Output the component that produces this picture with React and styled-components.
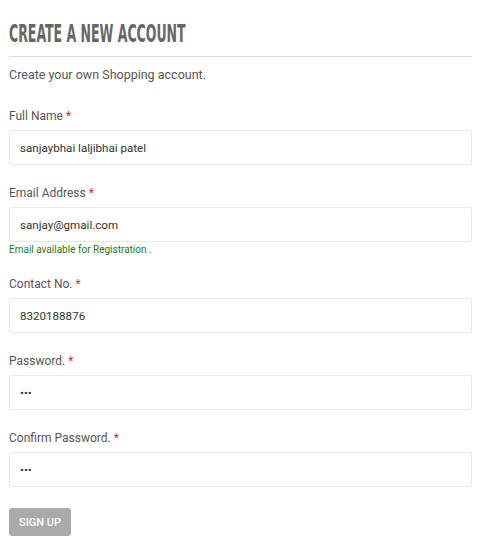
import React, { useState } from 'react';
import styled, { createGlobalStyle } from 'styled-components';

const GlobalStyle = createGlobalStyle`
	body {
		margin: 0;
		background: #fff;
		font-family: Roboto, 'Liberation Sans', sans-serif;
		color: #555;
	}
	* { box-sizing: border-box; }
`;

const Wrapper = styled.div`
	width: 463px;
	margin-left: 9px;
	padding-top: 21px;
`;

const Title = styled.h2`
	margin: 0;
	height: 26px;
	font-size: 0;
	line-height: 26px;
`;

// condensed display face is not installed, so squeeze a bold sans to the same width
const TitleText = styled.span`
	display: inline-block;
	font-family: 'DejaVu Sans', sans-serif;
	font-stretch: condensed;
	font-weight: bold;
	font-size: 24px;
	color: #666;
	text-transform: uppercase;
	transform-origin: left center;
	transform: scaleX(0.58);
	white-space: nowrap;
`;

const Rule = styled.hr`
	border: 0;
	border-top: 1px solid #ddd;
	margin: 9px 0 0;
`;

const Intro = styled.p`
	margin: 9px 0 23px;
	font-size: 12.5px;
	line-height: 18px;
	color: #555;
`;

const Field = styled.div`
	margin-bottom: ${(p) => (p.$last ? '21px' : '19px')};
`;

const Label = styled.label`
	display: block;
	font-size: 12px;
	line-height: 18px;
	margin-bottom: 5px;
	color: #555;
`;

const Star = styled.span`
	color: #e02b27;
	margin-left: 3px;
`;

const Input = styled.input`
	display: block;
	width: 100%;
	height: 35px;
	padding: 0 10px;
	border: 1px solid #e8e8e8;
	border-radius: 2px;
	font-family: Roboto, 'Liberation Sans', sans-serif;
	font-size: 11.6px;
	color: #333;
	outline: none;
	background: #fff;
`;

const Hint = styled.div`
	font-size: 10px;
	line-height: 12px;
	margin-top: 2px;
	color: #1a7a1a;
`;

const Button = styled.button`
	height: 28px;
	padding: 0 10px;
	border: 0;
	border-radius: 3px;
	background: #aaa;
	color: #fff;
	font-family: Roboto, 'Liberation Sans', sans-serif;
	font-size: 11px;
	font-weight: 500;
	text-transform: uppercase;
`;

const fields = [
	{ label: 'Full Name', value: 'sanjaybhai laljibhai patel', type: 'text' },
	{ label: 'Email Address', value: 'sanjay@gmail.com', type: 'text', hint: 'Email available for Registration .' },
	{ label: 'Contact No.', value: '8320188876', type: 'text' },
	{ label: 'Password.', value: 'abc', type: 'password' },
	{ label: 'Confirm Password.', value: 'abc', type: 'password' },
];

const App = () => {
	const [values, setValues] = useState(fields.map((f) => f.value));

	return (
		<>
			<GlobalStyle />
			<Wrapper>
				<Title>
					<TitleText>Create a new account</TitleText>
				</Title>
				<Rule />
				<Intro>Create your own Shopping account.</Intro>

				<form onSubmit={(e) => e.preventDefault()}>
					{fields.map((f, index) => (
						<Field key={index} $last={index === fields.length - 1}>
							<Label>
								{f.label}
								<Star>*</Star>
							</Label>
							<Input
								type={f.type}
								value={values[index]}
								onChange={(e) => {
									const next = [...values];
									next[index] = e.target.value;
									setValues(next);
								}}
							/>
							{f.hint && <Hint>{f.hint}</Hint>}
						</Field>
					))}
					<Button type="submit">Sign Up</Button>
				</form>
			</Wrapper>
		</>
	);
};

export default App;
